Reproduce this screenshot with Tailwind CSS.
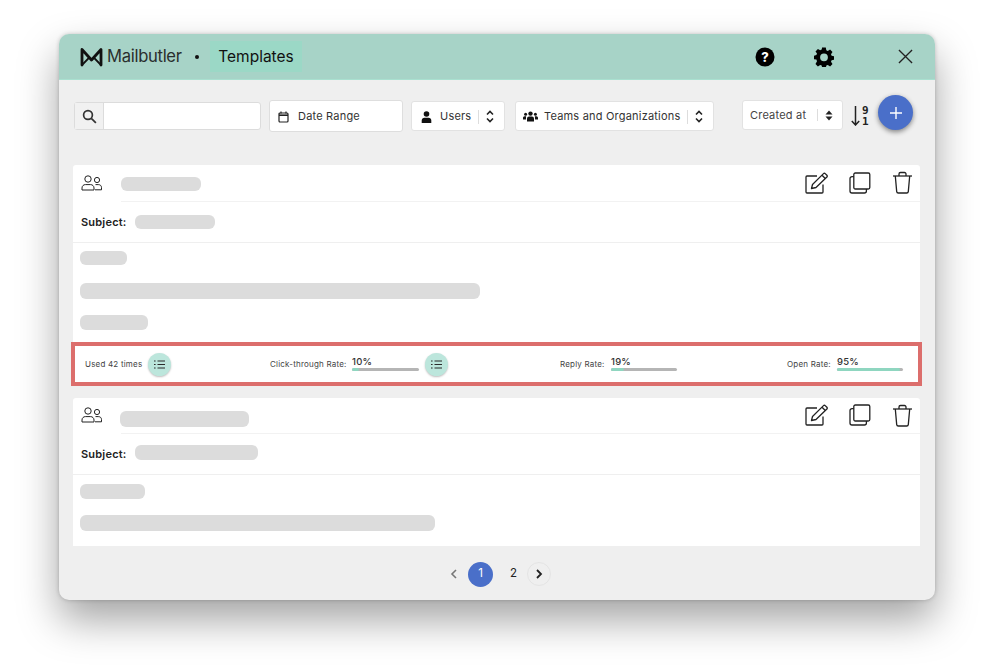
<!DOCTYPE html>
<html lang="en">
<head>
  <meta charset="UTF-8">
  <title>Mailbutler Templates</title>
  <script src="https://cdn.jsdelivr.net/npm/@tailwindcss/browser@4"></script>
</head>
<body class="bg-white font-['Inter',sans-serif] text-[#222]">
<div class="w-[993px] h-[666px] pt-[34px] pl-[59px] overflow-hidden">

  <!-- Window -->
  <div class="w-[876px] h-[566px] rounded-[10px] bg-[#efefef] flex flex-col shadow-[0_20px_40px_rgba(0,0,0,0.36),0_0_4px_rgba(0,0,0,0.2)]">

    <!-- Header -->
    <header class="h-[46px] shrink-0 bg-[#a7d3c7] rounded-t-[10px] flex items-center pl-[21px] border-b border-[#a9e0d0]">
      <svg width="23" height="20" viewBox="0 0 23 20" fill="none" stroke="#111" stroke-width="2.8" stroke-linejoin="round" stroke-linecap="round"><path d="M2 18V2.5L11.5 13 21 2.5V18"/><path d="M2.4 17.6L8.2 11.6M20.6 17.6L14.8 11.6" stroke-width="2"/></svg>
      <span class="ml-[4px] w-[75px] text-[16.6px] leading-none text-[#2a2f2e] tracking-[-0.3px]">Mailbutler</span>
      <span class="ml-[13px] w-[4px] h-[4px] rounded-full bg-[#111]"></span>
      <span class="ml-[11px] w-[92px] h-[31px] bg-[#9bd8c6] flex items-center justify-center text-[15.5px] text-[#111]">Templates</span>
      <svg class="ml-[453px]" width="20" height="20" viewBox="0 0 20 20"><circle cx="10" cy="10" r="9.5" fill="#000"/><text x="10" y="14.5" text-anchor="middle" font-size="13" font-weight="800" font-family="Inter" fill="#fff">?</text></svg>
      <svg class="ml-[39px]" width="20" height="20" viewBox="0 0 20 20"><path fill="#000" fill-rule="evenodd" d="M8.2 .6h3.6l.5 2.6 1.5.7 2.3-1.4 2.4 2.5-1.5 2.2.6 1.5 2.6.6v3.4l-2.6.5-.6 1.6 1.5 2.2-2.4 2.4-2.3-1.4-1.5.6-.5 2.6H8.2l-.5-2.6-1.5-.6-2.3 1.4-2.4-2.4L3 14.2l-.6-1.6-2.6-.5V8.7l2.6-.6.6-1.5-1.5-2.2 2.4-2.5 2.3 1.4 1.5-.7.5-2.6ZM10 6.4a3.9 3.9 0 1 0 0 7.8 3.9 3.9 0 0 0 0-7.8Z"/></svg>
      <svg class="ml-[64px]" width="15" height="15" viewBox="0 0 16 16" fill="none" stroke="#222" stroke-width="1.4"><path d="M1 1l14 14M15 1L1 15"/></svg>
    </header>

    <!-- Filters -->
    <div class="h-[85px] shrink-0 flex items-start pl-[15px] text-[11px] tracking-[0.2px] text-[#333]">
      <div class="mt-[22px] w-[187px] h-[28px] flex rounded-[3px] border border-[#dcdcdc] bg-white">
        <div class="w-[29px] bg-[#f1f1f1] border-r border-[#dcdcdc] flex items-center justify-center">
          <svg width="15" height="15" viewBox="0 0 15 15" fill="none" stroke="#333" stroke-width="1.7"><circle cx="6" cy="6" r="4.4"/><path d="M9.3 9.3l4.6 4.6"/></svg>
        </div>
      </div>
      <div class="mt-[20px] ml-[8px] w-[134px] h-[32px] rounded-[3px] border border-[#dedede] bg-white flex items-center pl-[8px] pt-[1px]">
        <svg width="11" height="12" viewBox="0 0 11 12" fill="none" stroke="#222"><rect x="1" y="2" width="9" height="9" rx="1" stroke-width="1.2"/><path d="M1 4.2h9" stroke-width="1.6"/><path d="M3 .5v2M8 .5v2" stroke-width="1.2"/></svg>
        <span class="ml-[9px]">Date Range</span>
      </div>
      <div class="mt-[21px] ml-[8px] w-[94px] h-[30px] rounded-[3px] border border-[#e2e2e2] bg-white flex items-center pl-[9px] pr-[10px] pt-[1px]">
        <svg width="11" height="12" viewBox="0 0 11 12" fill="#111"><circle cx="5.5" cy="3" r="2.8"/><path d="M.7 12V9.6C.7 7.8 2 6.8 3.4 6.8h4.2c1.4 0 2.7 1 2.7 2.8V12Z"/></svg>
        <span class="ml-[8px]">Users</span>
        <span class="ml-auto h-[14px] border-l border-[#ddd]"></span>
        <svg class="ml-[7px]" width="8" height="13" viewBox="0 0 8 13" fill="none" stroke="#222" stroke-width="1.6"><path d="M1 4.5l3-3 3 3M1 8.5l3 3 3-3"/></svg>
      </div>
      <div class="mt-[21px] ml-[10px] w-[199px] h-[30px] rounded-[3px] border border-[#e2e2e2] bg-white flex items-center pl-[7px] pr-[10px] pt-[1px]">
        <svg width="15" height="11" viewBox="0 0 15 11" fill="#111"><circle cx="7.5" cy="2.6" r="2.2"/><circle cx="2.6" cy="3.2" r="1.5"/><circle cx="12.4" cy="3.2" r="1.5"/><path d="M4 10.5V7.6c0-1.3 1-2 2-2h3c1 0 2 .7 2 2v2.9Z"/><path d="M0 8.5V7c0-1 .7-1.7 1.6-1.7h1.6C3 6 3 6.8 3 8.5ZM15 8.5V7c0-1-.7-1.7-1.6-1.7h-1.6c.2.7.2 1.5.2 3.2Z"/></svg>
        <span class="ml-[6px]">Teams and Organizations</span>
        <span class="ml-auto h-[14px] border-l border-[#ddd]"></span>
        <svg class="ml-[7px]" width="8" height="13" viewBox="0 0 8 13" fill="none" stroke="#222" stroke-width="1.6"><path d="M1 4.5l3-3 3 3M1 8.5l3 3 3-3"/></svg>
      </div>
      <div class="mt-[20px] ml-[28px] w-[101px] h-[30px] rounded-[3px] border border-[#e2e2e2] bg-white flex items-center pl-[7px] pr-[9px] text-[#444]">
        <span>Created at</span>
        <span class="ml-auto h-[12px] border-l border-[#ddd]"></span>
        <svg class="ml-[7px]" width="8" height="11" viewBox="0 0 8 11" fill="#222"><path d="M4 .5L7.5 4.6H.5ZM4 10.5L.5 6.4h7Z"/></svg>
      </div>
      <div class="mt-[25px] ml-[8px] w-[20px] h-[22px] flex items-center">
        <svg width="9" height="20" viewBox="0 0 9 20" fill="none" stroke="#222" stroke-width="1.5"><path d="M4.5 0v19M.8 15l3.7 4 3.7-4"/></svg>
        <div class="ml-[2px] flex flex-col items-center text-[11px] leading-[11px] font-bold font-['DejaVu_Sans_Mono',monospace] text-[#222] tracking-normal"><span>9</span><span>1</span></div>
      </div>
      <div class="mt-[15px] ml-[7px] w-[35px] h-[35px] rounded-full bg-[#4a6fc9] shadow-[0_2px_5px_rgba(0,0,0,0.45)] flex items-center justify-center">
        <svg width="12" height="12" viewBox="0 0 12 12" stroke="#fff" stroke-width="1.4"><path d="M6 0v12M0 6h12"/></svg>
      </div>
    </div>

    <!-- Template list -->
    <div class="ml-[12px] h-[381px] shrink-0 overflow-hidden">

      <!-- First card -->
      <div class="ml-[2px] w-[847px] bg-white rounded-t-[3px]">
        <div class="h-[37px] flex items-center pl-[8px] pr-[6px]">
          <svg class="-translate-y-[1px]" width="22" height="16" viewBox="0 0 22 16" fill="none" stroke="#222" stroke-width="1"><circle cx="7" cy="4" r="3.2"/><path d="M1 15v-2c0-2 1.5-3.4 3.4-3.4h5.2c1.9 0 3.4 1.4 3.4 3.4v2Z"/><circle cx="16" cy="5" r="2.6"/><path d="M14.5 9.6h2.8c1.9 0 3.2 1.1 3.2 3v2.2H14"/></svg>
          <span class="ml-[18px] w-[80px] h-[14px] rounded-[6px] bg-[#dcdcdc]"></span>
          <div class="ml-auto flex items-center -translate-y-[1px] pr-[1px]">
            <svg width="24" height="22" viewBox="0 0 24 22" fill="none" stroke="#222" stroke-width="1.3" stroke-linejoin="round"><path d="M18 12.5V20a1 1 0 0 1-1 1H2a1 1 0 0 1-1-1V5a1 1 0 0 1 1-1h10"/><path d="M6.5 16.5l1-4L18.5 1.6a1.2 1.2 0 0 1 1.7 0l1.7 1.7a1.2 1.2 0 0 1 0 1.7L11 15.5Z"/><path d="M17 3.2l3.3 3.3"/></svg>
            <svg class="ml-[20px]" width="22" height="22" viewBox="0 0 22 22" fill="none" stroke="#222" stroke-width="1.3"><rect x="4.8" y="1" width="16" height="16" rx="1.5"/><path d="M4.8 4.6H3A2 2 0 0 0 1 6.6V19a2 2 0 0 0 2 2h12.4a2 2 0 0 0 2-2v-2"/></svg>
            <svg class="ml-[21px]" width="21" height="23" viewBox="0 0 21 23" fill="none" stroke="#222" stroke-width="1.3" stroke-linejoin="round"><path d="M1 5h19"/><path d="M7 5V3a1.5 1.5 0 0 1 1.5-1.5h4A1.5 1.5 0 0 1 14 3v2"/><path d="M3.3 5l1.4 15.6A1.6 1.6 0 0 0 6.3 22h8.4a1.6 1.6 0 0 0 1.6-1.4L17.7 5"/></svg>
          </div>
        </div>
        <div class="h-[41px] border-b border-[#efefef] flex items-center pl-[8px] relative">
          <span class="absolute left-[48px] right-0 -top-[1px] border-t border-[#f2f2f2]"></span>
          <span class="w-[46px] text-[11px] font-semibold tracking-[0.2px]">Subject:</span>
          <span class="ml-[8px] w-[80px] h-[14px] rounded-[6px] bg-[#dcdcdc]"></span>
        </div>
        <div class="h-[99px] pt-[8px] pl-[7px] flex flex-col items-start">
          <span class="w-[47px] h-[14px] rounded-[6px] bg-[#dcdcdc]"></span>
          <span class="mt-[18px] w-[400px] h-[16px] rounded-[6px] bg-[#dcdcdc]"></span>
          <span class="mt-[16px] w-[68px] h-[15px] rounded-[6px] bg-[#dcdcdc]"></span>
        </div>
      </div>

      <!-- Highlighted stats row -->
      <div class="w-[851px] h-[44px] border-4 border-[#dc6e6c] bg-white flex items-center pl-[10px] text-[8px] tracking-[0.2px] text-[#444]">
        <div class="w-[86px] flex items-center">
          <span>Used 42 times</span>
          <span class="ml-auto w-[23px] h-[23px] rounded-full bg-[#bce6dc] shadow-[0_1px_2px_rgba(0,0,0,0.25)] flex items-center justify-center">
            <svg width="11" height="9" viewBox="0 0 11 9" fill="none" stroke="#2b2b2b" stroke-width="1"><path d="M3.5 1H11M3.5 4.5H11M3.5 8H11M0 1h1.6M0 4.5h1.6M0 8h1.6" /></svg>
          </span>
        </div>
        <div class="ml-[99px] w-[178px] flex items-center">
          <span class="w-[82px]">Click-through Rate:</span>
          <div class="w-[67px] pb-[1px]">
            <div class="text-[9.5px] leading-[12px] font-medium text-[#333]">10%</div>
            <div class="h-[3px] rounded-full bg-[#b5b5b5]"><div class="h-full rounded-full bg-[#8fd6c0]" style="width:10%"></div></div>
          </div>
          <span class="ml-auto w-[23px] h-[23px] rounded-full bg-[#bce6dc] shadow-[0_1px_2px_rgba(0,0,0,0.25)] flex items-center justify-center">
            <svg width="11" height="9" viewBox="0 0 11 9" fill="none" stroke="#2b2b2b" stroke-width="1"><path d="M3.5 1H11M3.5 4.5H11M3.5 8H11M0 1h1.6M0 4.5h1.6M0 8h1.6" /></svg>
          </span>
        </div>
        <div class="ml-[112px] w-[117px] flex items-center">
          <span>Reply Rate:</span>
          <div class="ml-auto w-[66px] pb-[1px]">
            <div class="text-[9.5px] leading-[12px] font-medium text-[#333]">19%</div>
            <div class="h-[3px] rounded-full bg-[#b5b5b5]"><div class="h-full rounded-full bg-[#8fd6c0]" style="width:19%"></div></div>
          </div>
        </div>
        <div class="ml-[110px] w-[116px] flex items-center">
          <span>Open Rate:</span>
          <div class="ml-auto w-[66px] pb-[1px]">
            <div class="text-[9.5px] leading-[12px] font-medium text-[#333]">95%</div>
            <div class="h-[3px] rounded-full bg-[#b5b5b5]"><div class="h-full rounded-full bg-[#8fd6c0]" style="width:95%"></div></div>
          </div>
        </div>
      </div>

      <!-- Second card -->
      <div class="ml-[2px] mt-[12px] w-[847px] bg-white rounded-t-[3px]">
        <div class="h-[36px] flex items-center pl-[8px] pr-[6px]">
          <svg class="-translate-y-[1px]" width="22" height="16" viewBox="0 0 22 16" fill="none" stroke="#222" stroke-width="1"><circle cx="7" cy="4" r="3.2"/><path d="M1 15v-2c0-2 1.5-3.4 3.4-3.4h5.2c1.9 0 3.4 1.4 3.4 3.4v2Z"/><circle cx="16" cy="5" r="2.6"/><path d="M14.5 9.6h2.8c1.9 0 3.2 1.1 3.2 3v2.2H14"/></svg>
          <span class="ml-[17px] mt-[6px] w-[129px] h-[16px] rounded-[6px] bg-[#dcdcdc]"></span>
          <div class="ml-auto flex items-center -translate-y-[1px] pr-[1px]">
            <svg width="24" height="22" viewBox="0 0 24 22" fill="none" stroke="#222" stroke-width="1.3" stroke-linejoin="round"><path d="M18 12.5V20a1 1 0 0 1-1 1H2a1 1 0 0 1-1-1V5a1 1 0 0 1 1-1h10"/><path d="M6.5 16.5l1-4L18.5 1.6a1.2 1.2 0 0 1 1.7 0l1.7 1.7a1.2 1.2 0 0 1 0 1.7L11 15.5Z"/><path d="M17 3.2l3.3 3.3"/></svg>
            <svg class="ml-[20px]" width="22" height="22" viewBox="0 0 22 22" fill="none" stroke="#222" stroke-width="1.3"><rect x="4.8" y="1" width="16" height="16" rx="1.5"/><path d="M4.8 4.6H3A2 2 0 0 0 1 6.6V19a2 2 0 0 0 2 2h12.4a2 2 0 0 0 2-2v-2"/></svg>
            <svg class="ml-[21px]" width="21" height="23" viewBox="0 0 21 23" fill="none" stroke="#222" stroke-width="1.3" stroke-linejoin="round"><path d="M1 5h19"/><path d="M7 5V3a1.5 1.5 0 0 1 1.5-1.5h4A1.5 1.5 0 0 1 14 3v2"/><path d="M3.3 5l1.4 15.6A1.6 1.6 0 0 0 6.3 22h8.4a1.6 1.6 0 0 0 1.6-1.4L17.7 5"/></svg>
          </div>
        </div>
        <div class="h-[41px] border-b border-[#efefef] flex items-center pl-[8px] relative">
          <span class="absolute left-[48px] right-0 -top-[1px] border-t border-[#f2f2f2]"></span>
          <span class="w-[46px] text-[11px] font-semibold tracking-[0.2px]">Subject:</span>
          <span class="ml-[8px] mb-[3px] w-[123px] h-[15px] rounded-[6px] bg-[#dcdcdc]"></span>
        </div>
        <div class="h-[72px] pt-[9px] pl-[7px] flex flex-col items-start">
          <span class="w-[65px] h-[15px] rounded-[6px] bg-[#dcdcdc]"></span>
          <span class="mt-[16px] w-[355px] h-[16px] rounded-[6px] bg-[#dcdcdc]"></span>
        </div>
      </div>
    </div>

    <!-- Pagination -->
    <div class="h-[54px] shrink-0 flex items-center justify-center pl-[7px] pt-[2px] text-[11.5px] text-[#222]">
      <svg width="8" height="10" viewBox="0 0 8 10" fill="none" stroke="#777" stroke-width="1.6"><path d="M6 1L2 5l4 4"/></svg>
      <span class="ml-[10px] w-[25px] h-[25px] rounded-full bg-[#4a6fc9] text-white flex items-center justify-center">1</span>
      <span class="ml-[7px] w-[27px] text-center">2</span>
      <span class="w-[24px] h-[24px] rounded-full border border-[#e4e4e4] flex items-center justify-center">
        <svg width="8" height="10" viewBox="0 0 8 10" fill="none" stroke="#222" stroke-width="1.8"><path d="M2 1l4 4-4 4"/></svg>
      </span>
    </div>
  </div>
</div>
</body>
</html>
